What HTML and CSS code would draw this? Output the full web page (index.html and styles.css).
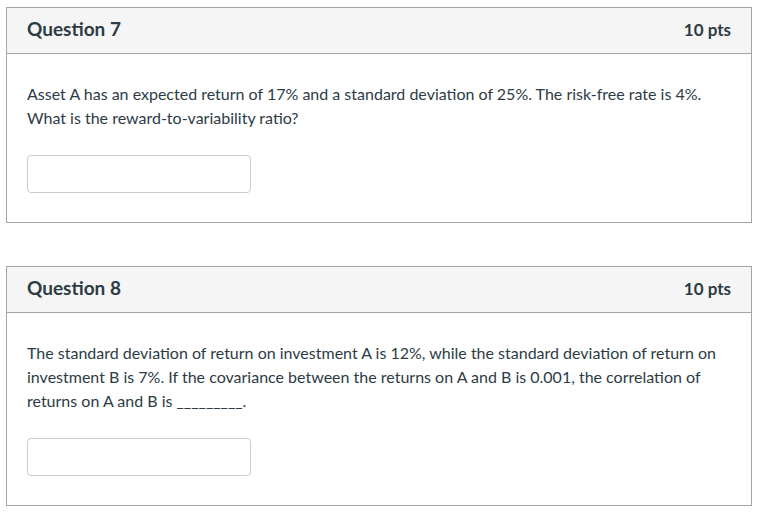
FILE: index.html
```html
<!DOCTYPE html>
<html>
<head>
<meta charset="utf-8">
<link rel="stylesheet" href="styles.css">
</head>
<body>
<div class="page">
  <div class="question">
    <div class="q-header">
      <span class="q-title">Question 7</span>
      <span class="q-pts">10 pts</span>
    </div>
    <div class="q-body">
      <p class="q-text">Asset A has an expected return of 17% and a standard deviation of 25%. The risk-free rate is 4%. What is the reward-to-variability ratio?</p>
      <input class="q-input" type="text">
    </div>
  </div>
  <div class="question">
    <div class="q-header">
      <span class="q-title">Question 8</span>
      <span class="q-pts">10 pts</span>
    </div>
    <div class="q-body">
      <p class="q-text">The standard deviation of return on investment A is 12%, while the standard deviation of return on investment B is 7%. If the covariance between the returns on A and B is 0.001, the correlation of returns on A and B is _________.</p>
      <input class="q-input" type="text">
    </div>
  </div>
</div>
</body>
</html>
```
FILE: styles.css
```css
html, body {
  margin: 0;
  padding: 0;
  background: #fff;
}
body {
  font-family: Lato, "Open Sans", sans-serif;
  color: #2d3b45;
}
.page {
  padding: 7px 18px 0 6px;
  display: flex;
  flex-direction: column;
  gap: 43px;
}
.question {
  border: 1px solid #a5a5a5;
  width: 744px;
}
.q-header {
  background: #f5f5f5;
  border-bottom: 1px solid #a5a5a5;
  height: 46px;
  box-sizing: border-box;
  padding: 9px 20px 0 20px;
  display: flex;
  align-items: baseline;
  justify-content: space-between;
}
.q-title {
  font-size: 19px;
  font-weight: 700;
}
.q-pts {
  font-size: 17px;
  font-weight: 700;
}
.q-body {
  padding: 28px 20px 29px 20px;
}
.q-text {
  margin: 0;
  font-size: 16px;
  line-height: 24px;
}
.q-input {
  display: block;
  margin-top: 25px;
  width: 224px;
  height: 38px;
  box-sizing: border-box;
  border: 1px solid #c7cdd1;
  border-radius: 4px;
  background: #fff;
  padding: 0;
}
```
